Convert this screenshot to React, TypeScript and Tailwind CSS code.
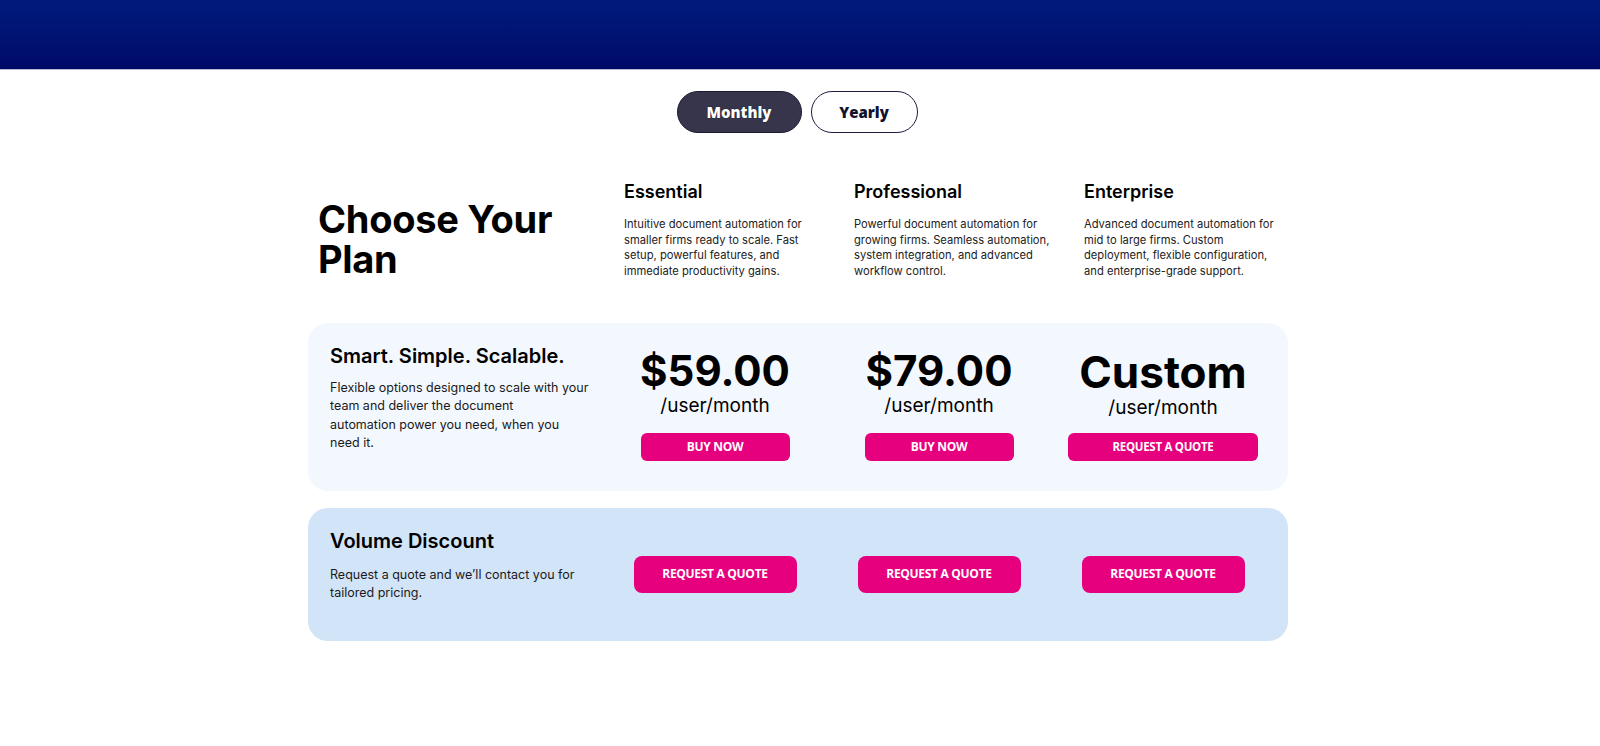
export default function App() {
  return (
    <div className="min-h-screen bg-white font-['Inter',sans-serif] text-black">
      <header className="h-[70px] border-b border-[#b8b8cc] bg-gradient-to-b from-[#001b7d] to-[#000a67]" />

      <div className="flex justify-center gap-[9px] pr-[6px] pt-[21px] font-['Open_Sans',sans-serif]">
        <button className="h-[42px] w-[125px] rounded-full border-[1.5px] border-[#1c1b33] bg-[#36354b] text-[15px] font-extrabold text-white [text-shadow:0_0_1px_#000]">
          Monthly
        </button>
        <button className="h-[42px] w-[107px] rounded-full border-[1.5px] border-[#1e1e40] bg-white text-[15px] font-extrabold text-[#12122e]">
          Yearly
        </button>
      </div>

      <div className="flex justify-center pr-[4px]">
        <main className="w-[980px]">
          <section className="mt-[47px] flex">
            <div className="w-[316px] shrink-0 pl-[10px] pt-[19px]">
              <h2 className="text-[38px] font-bold leading-[40px] tracking-[-0.3px]">
                Choose Your
                <br />
                Plan
              </h2>
            </div>
            <PlanIntro
              width="w-[230px]"
              title="Essential"
              lines={[
                "Intuitive document automation for",
                "smaller firms ready to scale. Fast",
                "setup, powerful features, and",
                "immediate productivity gains.",
              ]}
            />
            <PlanIntro
              width="w-[230px]"
              title="Professional"
              lines={[
                "Powerful document automation for",
                "growing firms. Seamless automation,",
                "system integration, and advanced",
                "workflow control.",
              ]}
            />
            <PlanIntro
              width="w-[204px]"
              title="Enterprise"
              lines={[
                "Advanced document automation for",
                "mid to large firms. Custom",
                "deployment, flexible configuration,",
                "and enterprise-grade support.",
              ]}
            />
          </section>

          <section className="mt-[43px] grid h-[168px] grid-cols-[273px_224px_224px_224px] rounded-[20px] bg-[#f3f7fe] pl-[22px] pr-[13px] pt-[20px]">
            <div>
              <h3 className="text-[20px] font-semibold leading-[26px]">Smart. Simple. Scalable.</h3>
              <p className="mt-[10px] whitespace-nowrap text-[12.5px] leading-[18.5px] text-[#1a1a1a]">
                Flexible options designed to scale with your
                <br />
                team and deliver the document
                <br />
                automation power you need, when you
                <br />
                need it.
              </p>
            </div>
            <PriceCol price="$59.00" cta="BUY NOW" />
            <PriceCol price="$79.00" cta="BUY NOW" />
            <div className="flex flex-col items-center pt-[5px]">
              <div className="text-[44px] font-bold leading-[48px]">Custom</div>
              <div className="text-[19px] leading-[24px]">/user/month</div>
              <button className="mt-[13px] h-[28px] w-[190px] rounded-[6px] bg-[#e6007e] font-['Open_Sans',sans-serif] text-[11.5px] font-bold tracking-tight text-white">
                REQUEST A QUOTE
              </button>
            </div>
          </section>

          <section className="mt-[17px] grid h-[133px] grid-cols-[273px_224px_224px_224px] items-center rounded-[20px] bg-[#d2e4f8] pl-[22px] pr-[13px]">
            <div className="self-start pt-[20px]">
              <h3 className="text-[20px] font-semibold leading-[26px]">Volume Discount</h3>
              <p className="mt-[12px] whitespace-nowrap text-[12.5px] leading-[18px] text-[#1a1a1a]">
                Request a quote and we’ll contact you for
                <br />
                tailored pricing.
              </p>
            </div>
            <QuoteBtn />
            <QuoteBtn />
            <QuoteBtn />
          </section>
        </main>
      </div>
    </div>
  );
}

function PlanIntro({ title, lines, width }: { title: string; lines: string[]; width: string }) {
  return (
    <div className={`${width} shrink-0`}>
      <h3 className="text-[18px] font-semibold leading-[24px]">{title}</h3>
      <p className="mt-[13px] whitespace-nowrap text-[11.2px] leading-[15.7px] text-[#222]">
        {lines.map((l, i) => (
          <span key={i} className="block">
            {l}
          </span>
        ))}
      </p>
    </div>
  );
}

function PriceCol({ price, cta }: { price: string; cta: string }) {
  return (
    <div className="flex flex-col items-center pt-[4px]">
      <div className="text-[42px] font-bold leading-[47px]">{price}</div>
      <div className="text-[19px] leading-[24px]">/user/month</div>
      <button className="mt-[15px] h-[28px] w-[149px] rounded-[6px] bg-[#e6007e] font-['Open_Sans',sans-serif] text-[12px] font-bold tracking-tight text-white">
        {cta}
      </button>
    </div>
  );
}

function QuoteBtn() {
  return (
    <div className="flex justify-center">
      <button className="h-[37px] w-[163px] rounded-[8px] bg-[#e6007e] font-['Open_Sans',sans-serif] text-[12px] font-bold tracking-tight text-white">
        REQUEST A QUOTE
      </button>
    </div>
  );
}
